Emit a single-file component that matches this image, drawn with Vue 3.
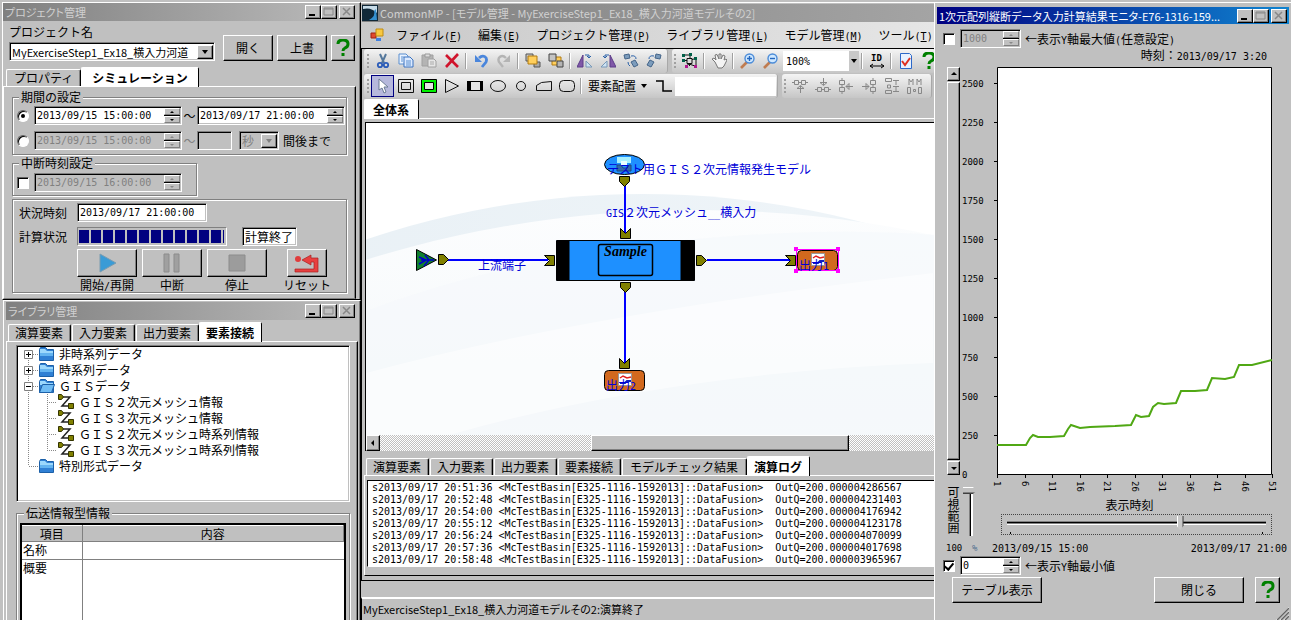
<script setup>
import { h, ref } from 'vue'

// Half-width runs use a 6px monospace face, full-width runs the 12px Japanese face.
const MixedText = (props) =>
  h('span', { class: 'mixed' }, props.text.split(/([\x20-\x7e]+)/).filter(Boolean).map((run) =>
    h('span', { class: /^[\x20-\x7e]/.test(run) ? 'half' : 'full' }, run)))
MixedText.props = ['text']

const startTime = ref('2013/09/15 15:00:00')
const endTime = ref('2013/09/17 21:00:00')
const offsetTime = ref('2013/09/15 15:00:00')
const breakTime = ref('2013/09/15 16:00:00')
const stateTime = ref('2013/09/17 21:00:00')
const period = ref('absolute')
const minOn = ref(true)
const shownTime = ref(109)
const range = ref(0)

const runButtons = [
  { id: 'start', label: '開始/再開', icon: '<path d="M4 1v18l16-9z" fill="#3a9bd6" stroke="#7a9cb0"/>' },
  { id: 'pause', label: '中断', icon: '<path d="M3 1h5v18H3zM13 1h5v18h-5z" fill="#a0a0a0" stroke="#8c8c8c"/>' },
  { id: 'stop', label: '停止', icon: '<path d="M3 2h16v16H3z" fill="#9c9c9c" stroke="#8c8c8c"/>' },
  { id: 'reset', label: 'リセット', icon: '<circle cx="2" cy="6" r="3" fill="#e03c3c"/><path d="M6 7l9-5v3h7v14H-1v-3h19V9h-3v3z" fill="#e84040" stroke="#a82020" stroke-width=".7"/>' },
]

const libTabs = ['演算要素', '入力要素', '出力要素', '要素接続']
const logTabs = ['演算要素', '入力要素', '出力要素', '要素接続', 'モデルチェック結果', '演算ログ']

const tree = [
  { text: '非時系列データ', kind: 'plus', first: true },
  { text: '時系列データ', kind: 'plus' },
  { text: 'ＧＩＳデータ', kind: 'minus' },
  { text: 'ＧＩＳ２次元メッシュ情報', kind: 'leaf' },
  { text: 'ＧＩＳ３次元メッシュ情報', kind: 'leaf' },
  { text: 'ＧＩＳ２次元メッシュ時系列情報', kind: 'leaf' },
  { text: 'ＧＩＳ３次元メッシュ時系列情報', kind: 'leaf', last: true },
  { text: '特別形式データ', kind: 'end' },
]

const menus = [
  ['ファイル', 'F'], ['編集', 'E'], ['プロジェクト管理', 'P'],
  ['ライブラリ管理', 'L'], ['モデル管理', 'M'], ['ツール', 'T'],
]

const g = (s, a = '') => `<g fill="none" stroke="#111" ${a}>${s}</g>`
const gray = (s) => `<g fill="none" stroke="#888">${s}</g>`
const editTools = [
  { n: '切り取り', d: '<path d="M5 1l4 9M11 1L7 10" stroke="#55789c" stroke-width="2" fill="none"/><circle cx="5" cy="12" r="2.2" fill="none" stroke="#2c5cb8" stroke-width="1.8"/><circle cx="11" cy="12" r="2.2" fill="none" stroke="#2c5cb8" stroke-width="1.8"/>' },
  { n: 'コピー', d: '<path d="M1 1h7l2 2v8H1z" fill="#eaf3ff" stroke="#5b8fd0"/><path d="M6 4h6l3 3v7H6z" fill="#dceaff" stroke="#3a72c0"/><path d="M8 8h5M8 10h5M8 12h5M3 4h3M3 6h2M3 8h2" stroke="#5b8fd0"/>' },
  { n: '貼り付け', d: '<path d="M1 2h11v11H1z" fill="#b4b4b4" stroke="#a0a0a0"/><path d="M4 1h5v3H4z" fill="#ddd" stroke="#999"/><path d="M7 6h6l2 2v6H7z" fill="#e6e6e6" stroke="#a0a0a0"/><path d="M9 9h4M9 11h4" stroke="#aaa"/>' },
  { n: '削除', d: '<path d="M2 2l12 12M14 1L2 14" stroke="#d0142c" stroke-width="2.6"/>' },
  null,
  { n: '元に戻す', d: '<path d="M6 5c4-4 9-1 7 4l-4 5" fill="none" stroke="#4a86dc" stroke-width="2.8"/><path d="M2 2v7h7z" fill="#4a86dc"/>' },
  { n: 'やり直し', d: '<path d="M10 5C6 1 1 4 3 9l4 5" fill="none" stroke="#b4b4b4" stroke-width="2.4"/><path d="M14 2v7H7z" fill="#b4b4b4"/>' },
  null,
  { n: '前面へ', d: '<path d="M1 1h7v7H1z" fill="#c8c8c8" stroke="#555"/><path d="M9 9h6v5H9z" fill="#a8a8a8" stroke="#555"/><path d="M3 3h9v8H3z" fill="#ffcf5c" stroke="#b07a10"/>' },
  { n: '背面へ', d: '<path d="M4 4h9v8H4z" fill="#ffcf5c" stroke="#b07a10"/><path d="M1 1h7v7H1z" fill="#c4c4c4" stroke="#444"/><path d="M9 8h6v6H9z" fill="#b4b4b4" stroke="#444"/>' },
  null,
  { n: '左右反転', d: '<path d="M6 2v12H0z" fill="#8058a8" stroke="#5c3c88"/><path d="M9 8v6h6z" fill="#cfe4f4" stroke="#7898b8"/><path d="M8 2h4v3m-2-2l2 2 2-2" fill="none" stroke="#2860a8"/>' },
  { n: '上下反転', d: '<path d="M10 2v12h6z" fill="#8058a8" stroke="#5c3c88"/><path d="M7 8v6H1z" fill="#cfe4f4" stroke="#7898b8"/><path d="M9 2H5v3M3 3l2 2 2-2" fill="none" stroke="#2860a8"/>' },
  { n: '右回転', d: '<path d="M1 2l5-1 1 4-5 1z" fill="#7c9cbc" stroke="#446488"/><path d="M8 9l4-2 3 5-4 2z" fill="#7c9cbc" stroke="#446488"/><path d="M8 3q5-1 5 3M5 9q0 3 2 4" fill="none" stroke="#2860a8"/>' },
  { n: '左回転', d: '<path d="M10 1l5 1-1 4-5-1z" fill="#7c9cbc" stroke="#446488"/><path d="M4 7l4 2-3 5-4-2z" fill="#7c9cbc" stroke="#446488"/><path d="M8 3Q3 2 3 6" fill="none" stroke="#2860a8"/>' },
]
const modelTools = [
  { n: 'モデル', d: g('<path d="M2 2h8M5 5.500h5v5H5zM2 7.500h3M10 6.500l4-1v8M7.500 10v3M4 13l3-2 6 2M8 2v3"/>') + '<path d="M0 1h3v3H0zM7 0h3v3H7zM12 4h3v3h-3zM0 6h3v3H0z" fill="#006048"/><path d="M3 12h3v3H3zM12 12h3v3h-3z" fill="#b01890"/>' },
  null,
  { n: '手のひら', d: '<path d="M4 9L1 6l2-1 2 2-1-5 2-.5L8 6V1h2v5l2-4 2 1-1 4 2-1 1 1-3 6-2 2H7z" fill="#f4f4f4" stroke="#777"/>' },
  null,
  { n: '拡大', d: '<path d="M7 9l-6 6" stroke="#c07c50" stroke-width="2.6"/><circle cx="9.500" cy="5.500" r="4.500" fill="#cfe8ff" stroke="#4c8cd8" stroke-width="1.400"/><path d="M7 5.500h5M9.500 3v5" stroke="#2468c0" stroke-width="1.400"/>' },
  { n: '縮小', d: '<path d="M7 9l-6 6" stroke="#c07c50" stroke-width="2.6"/><circle cx="9.500" cy="5.500" r="4.500" fill="#cfe8ff" stroke="#4c8cd8" stroke-width="1.400"/><path d="M7 5.500h5" stroke="#2468c0" stroke-width="1.400"/>' },
]
const shapeTools = [
  { n: '選択', on: true, d: '<path d="M4 1v11l3-2 2 5 2-1-2-5h4z" fill="#fff" stroke="#6a7a94"/>' },
  { n: '二重枠', d: g('<path d="M.5 1.500h15v13H.5zM3.500 4.500h9v7h-9z"/>') },
  { n: '緑枠', d: '<path d="M.5 1.500h15v13H.5z" fill="#00f000" stroke="#000"/><path d="M3.500 4.500h9v7h-9z" fill="#e4e4e4" stroke="#000"/>' },
  { n: '三角', d: g('<path d="M1.500 1.500v13l13-6.500z"/>') },
  { n: '帯', d: '<path d="M0 3h16v10H0z"/><path d="M4 4h9v8H4z" fill="#e4e4e4"/>' },
  { n: '楕円', d: g('<ellipse cx="8" cy="8" rx="7.500" ry="5.500"/>') },
  { n: '円', d: g('<circle cx="8" cy="8" r="4.500"/>') },
  { n: '台形', d: g('<path d="M.5 12.500v-5l5-3 10-1v9z"/>') },
  { n: '角丸', d: g('<rect x=".5" y="2.500" width="15" height="11" rx="4"/>') },
]
const alignTools = [
  { n: '上揃え', d: gray('<path d="M2.500 2.500h4v4h-4zM9.500 2.500h4v4h-4zM6 4.500h4M0 4.500h2M14 4.500h2M8.500 8v7M5 10.500h7l-3.500-3z"/>') },
  { n: '下揃え', d: gray('<path d="M2.500 9.500h4v4h-4zM9.500 9.500h4v4h-4zM6 11.500h4M0 11.500h2M14 11.500h2M8.500 0v7M5 4.500h7l-3.500 3z"/>') },
  { n: '左揃え', d: gray('<path d="M1.500 2.500h5v4h-5zM1.500 9.500h5v4h-5zM4 6.500v3M4 0v2M4 14v2M15 8.500H8M11 5.500v6l-3-3z"/>') },
  { n: '右揃え', d: gray('<path d="M9.500 2.500h5v4h-5zM9.500 9.500h5v4h-5zM12 6.500v3M12 0v2M12 14v2M1 8.500h7M5 5.500v6l3-3z"/>') },
  { n: '縦間隔', d: gray('<path d="M1.500.5h6v3h-6zM3.500 7h3v3h-3zM1.500 12.500h6v3h-6zM9 2.500h6M9 8.500h6M9 13.500h6M12 3v4M12 9v4"/>') },
  { n: '横間隔', d: gray('<path d="M.5 9.500h3v6h-3zM6.500 11.500h2v2h-2zM11.500 9.500h3v6h-3zM2 7V1l2 3 2-3v6M10 7V1l2 3 2-3v6"/>') },
]

const logs = [
  ['20:51:36', '4286567'], ['20:52:48', '4231403'], ['20:54:00', '4176942'], ['20:55:12', '4123178'],
  ['20:56:24', '4070099'], ['20:57:36', '4017698'], ['20:58:48', '3965967'],
].map(([t, v]) => `s2013/09/17 ${t} <McTestBasin[E325-1116-1592013]::DataFusion>  OutQ=200.00000${v}`)

const yTicks = Array.from({ length: 11 }, (_, i) => ({ v: i * 250, y: Math.round(412 - i * 39.15) }))
const xTicks = Array.from({ length: 11 }, (_, i) => ({ v: 1 + i * 5, x: Math.round(37 + i * 27.5) }))
const curve = '37,383 66,383 70,376 73,373 78,375 90,375 104,374 108,367 111,363 120,366 130,365 155,364 171,363 176,353 181,355 189,354 193,345 198,341 204,342 216,341 221,329 235,329 247,328 252,316 265,317 274,315 279,303 292,303 312,298'
</script>

<template>
  <div class="desktop">
    <aside class="left">
      <section class="window project">
        <header class="title">
          <h2>プロジェクト管理</h2>
          <span class="caps">
            <button aria-label="最小化"><svg width="14" height="12"><path d="M3 9h6" stroke="#000" stroke-width="2" /></svg></button>
            <button aria-label="最大化"><svg width="14" height="12"><path d="M2 2h9v7H2zM2 3h9" stroke="#888" fill="none" /></svg></button>
            <button class="x" aria-label="閉じる"><svg width="14" height="12"><path d="M3 2l7 7M10 2L3 9" stroke="#888" stroke-width="1.500" /></svg></button>
          </span>
        </header>
        <div class="head">
          <div class="name">
            <label for="project">プロジェクト名</label>
            <span class="combo sunken">
              <select id="project"><option>MyExerciseStep1_Ex18_横入力河道</option></select>
              <i class="drop raised"></i>
            </span>
          </div>
          <button class="btn raised">開く</button>
          <button class="btn raised">上書</button>
          <button class="btn help raised" aria-label="ヘルプ"><svg width="14" height="18"><path d="M2 5q0-4 5-4t5 4q0 3-3 4-2 1-2 3M7 14v3" fill="none" stroke="#008000" stroke-width="3" /></svg></button>
        </div>
        <div class="tabs">
          <button class="tab wide">プロパティ</button>
          <button class="tab on wide">シミュレーション</button>
        </div>
        <div class="page">
          <fieldset class="period">
            <legend>期間の設定</legend>
            <div class="line">
              <input v-model="period" type="radio" name="period" value="absolute" aria-label="終了時刻で指定">
              <span class="spin sunken long"><input v-model="startTime" aria-label="開始時刻"><i class="updown"><button aria-label="増"></button><button aria-label="減"></button></i></span>
              <span class="tilde">～</span>
              <span class="spin sunken long"><input v-model="endTime" aria-label="終了時刻"><i class="updown"><button aria-label="増"></button><button aria-label="減"></button></i></span>
            </div>
            <div class="line off">
              <input v-model="period" type="radio" name="period" value="relative" aria-label="期間で指定">
              <span class="spin sunken long"><input v-model="offsetTime" disabled aria-label="起点時刻"><i class="updown"><button aria-label="増"></button><button aria-label="減"></button></i></span>
              <span class="tilde">～</span>
              <span class="spin sunken amount"><input id="amount" disabled aria-label="期間"></span>
              <span class="combo sunken unit"><select disabled aria-label="単位"><option>秒</option></select><i class="drop raised"></i></span>
              <label class="after" for="amount">間後まで</label>
            </div>
          </fieldset>
          <fieldset class="break">
            <legend>中断時刻設定</legend>
            <div class="line off">
              <input type="checkbox" aria-label="中断時刻を使う">
              <span class="spin sunken long"><input v-model="breakTime" disabled aria-label="中断時刻"><i class="updown"><button aria-label="増"></button><button aria-label="減"></button></i></span>
            </div>
          </fieldset>
          <div class="status-box">
            <div class="line">
              <label class="cap" for="state">状況時刻</label>
              <span class="spin sunken state"><input id="state" v-model="stateTime" readonly></span>
            </div>
            <div class="line">
              <span class="cap">計算状況</span>
              <span class="progress sunken" role="progressbar" aria-valuenow="100"><i></i></span>
              <span class="done sunken">計算終了</span>
            </div>
            <div class="runs">
              <div v-for="b in runButtons" :key="b.id" :class="['run', b.id]">
                <button class="raised" :aria-labelledby="b.id"><svg width="22" height="20" v-html="b.icon"></svg></button>
                <span :id="b.id"><MixedText :text="b.label" /></span>
              </div>
            </div>
          </div>
        </div>
      </section>

      <section class="window library">
        <header class="title">
          <h2>ライブラリ管理</h2>
          <span class="caps">
            <button aria-label="最小化"><svg width="14" height="12"><path d="M3 9h6" stroke="#000" stroke-width="2" /></svg></button>
            <button aria-label="最大化"><svg width="14" height="12"><path d="M2 2h9v7H2zM2 3h9" stroke="#888" fill="none" /></svg></button>
            <button class="x" aria-label="閉じる"><svg width="14" height="12"><path d="M3 2l7 7M10 2L3 9" stroke="#888" stroke-width="1.500" /></svg></button>
          </span>
        </header>
        <div class="tabs">
          <button v-for="t in libTabs" :key="t" :class="['tab', { on: t === '要素接続' }]">{{ t }}</button>
        </div>
        <div class="page lib-page">
          <ul class="tree sunken">
            <li v-for="r in tree" :key="r.text">
              <svg v-if="r.kind === 'leaf'" width="62" height="16">
                <path :d="r.last ? 'M11.500 0v16M30.500 0v8M30 8.500h10' : 'M11.500 0v16M30.500 0v16M30 8.500h10'" stroke="#888" stroke-dasharray="1 1" />
                <path d="M44 3h9l-8 9h8" fill="none" stroke="#222" stroke-width="1.500" />
                <path d="M41.500.5h3l2 2.500-2 2.500h-3zM51.500 9.500h5v5h-5z" fill="#808000" stroke="#333300" />
              </svg>
              <svg v-else width="42" height="16">
                <path :d="r.first ? 'M11.500 8v8M12 8.500h10' : r.kind === 'end' ? 'M11.500 0v8M12 8.500h10' : 'M11.500 0v16M12 8.500h10'" stroke="#888" stroke-dasharray="1 1" />
                <path v-if="r.kind !== 'end'" d="M7.500 4.500h8v8h-8z" fill="#fff" stroke="#808080" />
                <path v-if="r.kind !== 'end'" :d="r.kind === 'plus' ? 'M9 8.500h5M11.500 6v5' : 'M9 8.500h5'" stroke="#000" />
                <path d="M22.500 3.500l1-2h5l2 2h6v11h-14z" fill="#3080d4" stroke="#1c60a8" />
                <path d="M23 3h5l2 2h6v2H23z" fill="#9cd8fc" />
                <path v-if="r.kind === 'minus'" d="M25.500 6.500h12l-3 8h-12z" fill="#70bcf4" stroke="#1c60a8" />
                <path v-else d="M23 7h13v3H23z" fill="#64b4f0" />
              </svg>
              <span>{{ r.text }}</span>
            </li>
          </ul>
          <fieldset class="info">
            <legend>伝送情報型情報</legend>
            <div class="grid-box">
              <table>
                <thead><tr><th scope="col">項目</th><th scope="col">内容</th></tr></thead>
                <tbody>
                  <tr><td>名称</td><td></td></tr>
                  <tr class="tall"><td>概要</td><td></td></tr>
                </tbody>
              </table>
            </div>
          </fieldset>
        </div>
      </section>
    </aside>

    <main class="center">
      <header class="title main-title">
        <svg width="16" height="16"><path d="M0 0h16v16H0z" fill="#102838" /><path d="M1 4Q9 2 15 8V1H1z" fill="#c8dce8" /><path d="M7 15q7-4 5-9l2-2 1 11z" fill="#3490d0" /></svg>
        <h1>CommonMP - [モデル管理 - MyExerciseStep1_Ex18_横入力河道モデルその2]</h1>
      </header>
      <nav class="menu">
        <svg width="14" height="14"><path d="M1 5h5v5H1z" fill="#e04830" stroke="#a02010" /><path d="M6 1h7v7H6z" fill="#f8c840" stroke="#c08c10" /><path d="M6 10h5v3H6z" fill="#4080e0" /></svg>
        <button v-for="m in menus" :key="m[0]">{{ m[0] }}<span class="mono">(<u>{{ m[1] }}</u>)</span></button>
      </nav>
      <div class="work">
        <div class="bar">
          <div class="strip edit">
            <template v-for="(t, i) in editTools" :key="i">
              <button v-if="t" :aria-label="t.n"><svg width="16" height="16" v-html="t.d"></svg></button>
              <i v-else class="sep"></i>
            </template>
          </div>
          <div class="strip rest">
            <template v-for="(t, i) in modelTools" :key="i">
              <button v-if="t" :aria-label="t.n"><svg width="16" height="16" v-html="t.d"></svg></button>
              <i v-else class="sep"></i>
            </template>
            <span class="zoom"><select aria-label="倍率"><option>100%</option></select><i class="drop"></i></span>
            <i class="sep"></i>
            <button aria-label="ID幅"><b class="id">ID</b><svg width="16" height="6"><path d="M1 3h14M4 1L1 3l3 2M12 1l3 2-3 2" fill="none" stroke="#000" /></svg></button>
            <i class="sep"></i>
            <button aria-label="チェック"><svg width="16" height="16"><path d="M2.500.5h9l2 2v13h-11z" fill="#e8f2ff" stroke="#2c68c8" /><path d="M4 8l3 4 5-7" fill="none" stroke="#e03020" stroke-width="2" /></svg></button>
            <button aria-label="ヘルプ"><svg width="14" height="18"><path d="M2 5q0-4 5-4t5 4q0 3-3 4-2 1-2 3M7 14v3" fill="none" stroke="#008000" stroke-width="3" /></svg></button>
          </div>
        </div>
        <div class="bar">
          <div class="strip shapes">
            <button v-for="t in shapeTools" :key="t.n" :class="{ sel: t.on }" :aria-label="t.n"><svg width="16" height="16" v-html="t.d"></svg></button>
            <i class="sep"></i>
            <button class="place">要素配置<i class="tri"></i></button>
            <button aria-label="折れ線"><svg width="16" height="16"><path d="M0 3h7v10h9" fill="none" stroke="#000" stroke-width="1.500" /></svg></button>
            <input class="search" aria-label="検索">
          </div>
          <div class="strip align">
            <button v-for="t in alignTools" :key="t.n" :aria-label="t.n"><svg width="16" height="16" v-html="t.d"></svg></button>
          </div>
        </div>
        <div class="tabs model-tabs"><button class="tab on">全体系</button></div>
        <div class="model-page">
          <svg class="canvas" height="312" width="100%" role="img" aria-label="モデル図">
            <defs>
              <linearGradient id="band" x1="0" x2="1"><stop offset="0" stop-color="#e4edf3" /><stop offset=".6" stop-color="#eef4f8" /><stop offset="1" stop-color="#e9f2f6" /></linearGradient>
              <linearGradient id="inner" x1="0" y1="0" x2="0" y2="1"><stop offset="0" stop-color="#fcfdfe" /><stop offset=".12" stop-color="#f4f8fa" /><stop offset=".3" stop-color="#fff" /></linearGradient>
            </defs>
            <circle cx="277" cy="939" r="868" fill="url(#band)" />
            <ellipse cx="330" cy="939" rx="980" ry="852" fill="url(#inner)" />
            <path d="M0 188Q180 120 420 110T840 170V313H0z" fill="#f5f9fb" opacity=".6" />
            <path d="M0 313V250Q220 190 567 150V240Q300 250 80 313z" fill="#fff" opacity=".5" />

            <g stroke="#00f" stroke-width="2">
              <path d="M259 62v48M259 169v72M82 137h100M341 137h83" />
            </g>
            <ellipse cx="258.500" cy="41.500" rx="20" ry="10" fill="#1e90ff" stroke="#000" />
            <path d="M251 34h14v6h-14z" fill="#a8f0ff" /><path d="M255 38h6v5h-6z" fill="#e8ffff" /><path d="M251 42h4l2 3h4l2-3h2v6h-14z" fill="#3468a8" stroke="#1c4880" />
            <g fill="#1e90ff" stroke="#000">
              <path d="M190.500 117.500h138v40h-138z" />
              <rect x="232.500" y="121.500" width="54" height="31" rx="2" stroke-width="1.500" />
              <path d="M191 118h12v39h-12zM315 118h13v39h-13z" fill="#000" />
            </g>
            <text class="script" x="259.500" y="133" text-anchor="middle">Sample</text>
            <path d="M50.500 126.500v21l20-10.500z" fill="#108030" stroke="#000" />
            <path d="M53 134l7 3-7 4M55 137h13M59 132l4 5-5 6" fill="none" stroke="#0000c8" stroke-width="1.500" />
            <g fill="#808000" stroke="#000">
              <path d="M253.500 53.500h10v5l-5 5-5-5zM254.500 159.500h10v5l-5 5-5-5z" />
              <path d="M254.500 105.500l5 5 5-5v10h-10zM253.500 235.500l5 5 5-5v10h-10z" />
              <path d="M72.500 131.500h5l5 5-5 5h-5zM330.500 132.500h5l5 5-5 5h-5z" />
              <path d="M178.500 132.500h10v10h-10l5-5zM419.500 132.500h10v10h-10l5-5z" />
            </g>
            <g fill="#d2691e" stroke="#000">
              <rect x="238.500" y="247.500" width="40" height="20" rx="4" />
              <rect x="431.500" y="127.500" width="40" height="20" rx="4" />
            </g>
            <path d="M252.500 250.500h13v12h-13zM445.500 130.500h13v12h-13z" fill="#fff" stroke="#999" />
            <path d="M254 255l3-2 4 2 4-1M447 135l3-2 4 2 4-1" fill="none" stroke="#e02020" stroke-width="1.500" />
            <path d="M254 260h5l2-2h4M447 140h5l2-2h4" fill="none" stroke="#1020c0" stroke-width="2" />
            <path d="M430.500 126.500h42v21h-42z" fill="none" stroke="#f0f" />
            <path d="M428 124h4v4h-4zM470 124h4v4h-4zM428 146h4v4h-4zM470 146h4v4h-4z" fill="#f0f" />
            <g class="names">
              <text x="241" y="51">テスト用ＧＩＳ２次元情報発生モデル</text>
              <text x="240" y="94"><tspan class="half">GIS</tspan>２次元メッシュ<tspan class="half">__</tspan>横入力</text>
              <text x="112" y="147">上流端子</text>
              <text x="433" y="147">出力<tspan class="half">1</tspan></text>
              <text x="240" y="267">出力<tspan class="half">2</tspan></text>
            </g>
          </svg>
          <div class="hscroll"><button class="raised" aria-label="左へ"><svg width="12" height="12"><path d="M7 3v6L4 6z" /></svg></button><i class="thumb raised"></i></div>
        </div>
        <div class="tabs log-tabs">
          <button v-for="t in logTabs" :key="t" :class="['tab', { on: t === '演算ログ', extra: t.length > 6 }]">{{ t }}</button>
        </div>
        <div class="log-page">
          <ul class="log"><li v-for="l in logs" :key="l">{{ l }}</li></ul>
        </div>
      </div>
      <footer class="status">MyExerciseStep1_Ex18_横入力河道モデルその2:演算終了</footer>
    </main>

    <section class="monitor">
      <header class="title active">
        <h2>1次元配列縦断データ入力計算結果モニタ-E76-1316-159...</h2>
        <span class="caps">
          <button aria-label="最小化"><svg width="14" height="12"><path d="M3 9h6" stroke="#000" stroke-width="2" /></svg></button>
          <button aria-label="最大化"><svg width="14" height="12"><path d="M2 2h9v7H2zM2 3h9" stroke="#888" fill="none" /></svg></button>
          <button class="x" aria-label="閉じる"><svg width="14" height="12"><path d="M3 2l7 7M10 2L3 9" stroke="#888" stroke-width="1.500" /></svg></button>
        </span>
      </header>
      <div class="line limit off">
        <input type="checkbox" aria-label="最大値を指定">
        <span class="spin sunken short"><input id="ymax" value="1000" disabled><i class="updown"><button aria-label="増"></button><button aria-label="減"></button></i></span>
        <label for="ymax"><MixedText text="←表示Y軸最大値(任意設定)" /></label>
      </div>
      <p class="now"><MixedText text="時刻：2013/09/17 3:20" /></p>
      <div class="chart">
        <div class="vscroll">
          <button class="raised" aria-label="上へ"><svg width="11" height="12"><path d="M3 7h6L6 4z" /></svg></button>
          <i class="thumb raised"></i>
          <button class="raised" aria-label="下へ"><svg width="11" height="12"><path d="M3 5h6L6 8z" /></svg></button>
        </div>
        <svg width="330" height="424" class="plot" role="img" aria-label="縦断グラフ">
          <path d="M37.500 5.500h274v407h-274z" fill="#fff" stroke="#000" />
          <g v-for="t in yTicks" :key="t.v">
            <path v-if="t.v" :d="`M34 ${t.y + .5}h4`" stroke="#000" />
            <text x="2" :y="t.y + 4">{{ t.v }}</text>
          </g>
          <g v-for="t in xTicks" :key="t.v">
            <path :d="`M${t.x + .5} 412v4`" stroke="#000" />
            <text :transform="`translate(${t.x - 3} 419) rotate(90)`">{{ t.v }}</text>
          </g>
          <polyline :points="curve" fill="none" stroke="#50a814" stroke-width="2" />
        </svg>
      </div>
      <div class="controls">
        <label class="vlabel" for="range">可視範囲</label>
        <input id="range" v-model="range" class="vrange" type="range" min="0" max="100">
        <div class="timer">
          <label for="time">表示時刻</label>
          <div class="focus"><input id="time" v-model="shownTime" type="range" min="0" max="162"><span class="marks"></span></div>
        </div>
      </div>
      <div class="dates"><span class="pct">100</span><span class="unit-pct">%</span><span class="from">2013/09/15 15:00</span><span class="to">2013/09/17 21:00</span></div>
      <div class="line limit">
        <input v-model="minOn" type="checkbox" aria-label="最小値を指定">
        <span class="spin sunken short"><input id="ymin" value="0"><i class="updown"><button aria-label="増"></button><button aria-label="減"></button></i></span>
        <label for="ymin"><MixedText text="←表示Y軸最小値" /></label>
      </div>
      <div class="foot">
        <button class="btn raised">テーブル表示</button>
        <button class="btn raised push">閉じる</button>
        <button class="btn help raised" aria-label="ヘルプ"><svg width="14" height="18"><path d="M2 5q0-4 5-4t5 4q0 3-3 4-2 1-2 3M7 14v3" fill="none" stroke="#008000" stroke-width="3" /></svg></button>
      </div>
      <svg class="grip" width="14" height="14"><path d="M1 14L14 1M5 14l9-9M9 14l5-5" stroke="#fff" /><path d="M2 14L14 2M6 14l8-8M10 14l4-4" stroke="#666" stroke-width="1.500" /></svg>
    </section>
  </div>
</template>

<style>
body { background: #fff; }
.mixed .half, .names .half, .mono { font-family: "DejaVu Sans Mono", monospace; font-size: 10px; line-height: 1; white-space: pre; }
</style>

<style scoped>
* { box-sizing: border-box; margin: 0; padding: 0; }
.desktop {
  display: grid; grid-template-columns: 361px minmax(0, 1fr) 357px;
  height: 100vh; border: solid #fff; border-width: 0 3px 2px 0; overflow: hidden;
  background: #c0c0c0; color: #000;
  font: 12px/14px "Noto Sans CJK JP", sans-serif; white-space: nowrap;
}
button, input, select { font: inherit; color: inherit; border-radius: 0; outline: 0; }
button { background: #c0c0c0; border: 0; white-space: nowrap; }
ul { list-style: none; }
svg { display: block; flex: none; }
.raised { border: 1px solid; border-color: #fff #000 #000 #fff; box-shadow: inset -1px -1px #808080; background: #c0c0c0; }
.sunken { border: 1px solid; border-color: #808080 #fff #fff #808080; box-shadow: inset 1px 1px #000, inset -1px -1px #c0c0c0; background: #fff; }

.left { display: flex; flex-direction: column; min-height: 0; background: #c0c0c0; }
.window { border: 1px solid; border-color: #fff #000 #000 #fff; box-shadow: inset -1px 0 #808080; }
.project { margin: 2px 0 0 2px; }
.title { display: flex; align-items: center; height: 18px; padding: 0 2px; background: linear-gradient(90deg, #808080, #bcbcbc); color: #d0d0d0; }
.title h1, .title h2 { flex: 1; min-width: 0; overflow: hidden; font-size: 11px; font-weight: 400; line-height: 18px; font-feature-settings: "palt"; }
.project .title, .library .title { margin-right: 3px; }
.caps { display: flex; }
.caps button { display: grid; place-items: center; width: 16px; height: 14px; border: 1px solid; border-color: #fff #000 #000 #fff; box-shadow: inset -1px -1px #808080; }
.caps .x { margin-left: 2px; }

.head { display: flex; align-items: flex-end; gap: 4px; padding: 3px 0 2px 6px; }
.name { width: 206px; margin-right: 4px; display: flex; flex-direction: column; gap: 2px; }
.name label { line-height: 16px; }
.combo { display: flex; height: 19px; padding: 2px 1px 1px 2px; }
.combo select { flex: 1; min-width: 0; appearance: none; border: 0; background: none; line-height: 14px; }
#project { font-size: 11px; }
.drop { width: 16px; display: grid; place-items: center; flex: none; }
.drop::after, .tri { content: ""; border: solid transparent; border-width: 4px 3px 0; border-top-color: #000; }
.btn { height: 26px; width: 50px; display: grid; place-items: center; }
.help { width: 24px; }

.tabs { display: flex; align-items: flex-end; height: 19px; margin-top: 4px; padding-left: 3px; }
.tab { height: 17px; padding: 0 7px 0 6px; border: 1px solid; border-color: #fff #000 transparent #fff; border-bottom: 0; border-radius: 2px 2px 0 0; margin-right: 1px; line-height: 14px; box-shadow: inset -1px 0 #808080; }
.tab.on { height: 20px; margin-bottom: -1px; background: #fff; font-weight: 700; z-index: 1; box-shadow: none; margin-left: -1px; }
.wide { padding: 0 7px; }
.on.wide { padding: 0 10px; }
.page { border: 1px solid; border-color: #fff #000 #808080 #fff; box-shadow: inset -1px 0 #808080; margin-right: 4px; padding: 3px 8px 5px; }

fieldset { min-width: 0; border: 1px solid #808080; box-shadow: 1px 1px #fff, inset 1px 1px #fff; }
legend { margin-left: 4px; padding: 0 2px; background: #c0c0c0; line-height: 14px; }
.line { display: flex; align-items: center; height: 19px; }
.period { padding: 2px 0 4px 4px; display: flex; flex-direction: column; gap: 6px; }
.period legend, .break legend { margin-left: 2px; }
.break { width: 185px; margin-top: 1px; padding: 3px 0 3px 4px; }
.line input[type="radio"], .line input[type="checkbox"] { appearance: none; width: 12px; height: 12px; margin-right: 5px; background: #fff; border: 1px solid; border-color: #606060 #fff #fff #606060; box-shadow: inset 1px 1px #000; display: grid; place-items: center; flex: none; }
.line input[type="radio"] { border-radius: 50%; }
.line input[type="radio"]:checked::after { content: ""; width: 4px; height: 4px; border-radius: 50%; background: #000; }
.line input[type="checkbox"]:checked::after { content: ""; width: 4px; height: 7px; border: solid #000; border-width: 0 2px 2px 0; transform: rotate(40deg); }
.spin { display: flex; height: 19px; padding: 1px; font: 10px/15px "DejaVu Sans Mono", monospace; }
.spin input { flex: 1; min-width: 0; border: 0; background: none; padding-left: 1px; }
.long { width: 148px; }
.off .sunken { background: #c0c0c0; color: #808080; }
.off .sunken input, .off select { color: #808080; opacity: 1; }
.updown { width: 16px; display: grid; gap: 1px; background: #000; }
.updown button { display: grid; place-items: center; border: 1px solid; border-color: #fff #808080 #808080 #fff; }
.updown button::after { content: ""; border: solid transparent; border-width: 0 2px 2px; border-bottom-color: #000; }
.updown button + button::after { border-width: 2px 2px 0; border-top-color: #000; }
.off .updown button::after { border-bottom-color: #888; border-top-color: #888; }
.tilde { width: 15px; text-align: center; display: flex; justify-content: center; }
.off .tilde { color: #808080; }
.amount { width: 35px; }
.unit { width: 40px; margin: 0 4px 0 7px; }
.off .drop::after { border-top-color: #808080; }

.status-box { margin-top: 3px; border: 1px solid #808080; box-shadow: 1px 1px #fff, inset 1px 1px #fff; padding: 3px 0 0 6px; }
.status-box .line + .line { margin-top: 5px; }
.cap { width: 58px; }
.state { width: 130px; }
.progress { width: 150px; height: 19px; padding: 2px 2px 2px 1px; background: #c0c0c0; box-shadow: none; margin-right: 15px; }
.progress i { display: block; height: 100%; background: repeating-linear-gradient(90deg, #000080 0 10px, #c0c0c0 10px 12px); }
.done { width: 55px; height: 19px; padding: 1px 2px; line-height: 15px; }
.runs { display: flex; gap: 5px; padding: 3px 0 0 58px; }
.run { width: 60px; display: flex; flex-direction: column; align-items: center; gap: 1px; line-height: 13px; }
.run button { width: 100%; height: 28px; display: grid; place-items: center; }
.reset { width: 40px; margin-left: 15px; }
.run svg { overflow: visible; }

.library { flex: 1; min-height: 0; margin-left: 3px; padding: 1px 0 0 2px; border-bottom: 0; display: flex; flex-direction: column; }
.library .tabs { margin-top: 2px; flex: none; padding-left: 2px; }
.library .title { flex: none; }
.lib-page { flex: 1; min-height: 0; display: flex; flex-direction: column; padding: 3px 7px 0 9px; margin-right: 2px; border-bottom: 0; }
.tree { height: 157px; flex: none; }
.tree li { display: flex; align-items: center; height: 16px; }
.info { flex: 1; min-height: 0; margin-top: 4px; padding: 3px 3px 0; border-bottom: 0; display: flex; flex-direction: column; }
.grid-box { flex: 1; border: 2px solid; border-color: #000 #000 #808080; border-bottom: 0; background: #fff; display: flex; }
table { width: 100%; height: 100%; min-height: 94px; border-collapse: collapse; }
th { height: 16px; font-weight: 400; line-height: 14px; background: #c0c0c0; border: 1px solid #808080; border-top-color: #fff; }
th:first-child, td:first-child { width: 60px; border-left: 0; }
td { height: 18px; line-height: 15px; padding-left: 1px; vertical-align: top; border: 1px solid #808080; border-right: 0; }
.tall td { height: auto; border-bottom: 0; }

.center { min-width: 0; display: flex; flex-direction: column; border-top: 1px solid #fff; margin-top: 2px; overflow: hidden; }
.main-title { height: 18px; margin: 1px 0 0 1px; padding: 0 1px 0 0; gap: 2px; background: linear-gradient(90deg, #808080, #a4a4a4); flex: none; }
.menu { height: 26px; display: flex; align-items: center; gap: 16px; padding-left: 9px; background: linear-gradient(90deg, #c8c8c8, #e6e6e6); flex: none; }
.menu svg { margin-right: -4px; }
.menu button { background: none; display: flex; align-items: baseline; flex: none; }
.work { flex: 1; border: 1px solid #000; border-width: 1px 0 1px 1px; min-height: 0; display: flex; flex-direction: column; padding-left: 2px; }
.bar { display: flex; height: 25px; gap: 4px; flex: none; }
.strip { display: flex; align-items: center; height: 24px; border-radius: 3px; padding-left: 7px; background: linear-gradient(#f4f4f4, #c6c6c6); border-right: 1px solid #a8a8a8; flex: none; }
.strip::before { content: ""; align-self: center; width: 0; height: 14px; margin: 0 2px 0 -4px; border-left: 2px dotted #a0a0a0; }
.strip button { width: 23px; height: 22px; display: flex; flex-direction: column; align-items: center; justify-content: center; background: none; flex: none; }
.sep { width: 2px; height: 16px; margin: 0 2px; border-left: 1px solid #a0a0a0; border-right: 1px solid #fff; flex: none; }
.edit { width: 304px; }
.rest { width: 264px; padding-left: 4px; }
.rest::before { margin-left: -2px; }
.id { font: 700 9px/9px "DejaVu Sans Mono", monospace; }
.zoom { display: flex; width: 76px; height: 20px; margin-left: 1px; background: #fff; flex: none; }
.zoom select { flex: 1; min-width: 0; appearance: none; border: 0; background: none; padding-left: 3px; font: 10px "DejaVu Sans Mono", monospace; }
.zoom .drop { width: 10px; background: #c8c8c8; }
.shapes { width: 414px; }
.strip .sel { background: #b6b8dc; border: 1px solid #000080; }
.strip .place { width: auto; flex-direction: row; gap: 5px; padding: 0 5px 0 4px; }
.search { width: 101px; height: 19px; border: 0; }
.align { width: 150px; padding-left: 5px; }
.align::before { margin-left: -3px; }
.model-tabs { margin-top: 1px; padding-left: 1px; border-bottom: 1px solid #fff; flex: none; height: 19px; }
.model-tabs .tab { padding: 0 9px 0 8px; }
.model-page { margin: 3px 0 0 1px; border-left: 1px solid #000; border-top: 1px solid #000; flex: none; }
.canvas { background: #fff; }
.names { fill: #0000d8; font-size: 12px; }
.script { font: italic 700 14px "Liberation Serif", serif; }
.hscroll { display: flex; height: 16px; background: repeating-conic-gradient(#fff 0 25%, #c0c0c0 0 50%) 0 0 / 2px 2px; }
.hscroll button { width: 14px; display: grid; place-items: center; }
.hscroll .thumb { width: 258px; margin-left: 211px; }
.log-tabs { flex: none; margin-top: 5px; padding-left: 2px; }
.log-tabs .extra { padding: 0 8px 0 7px; }
.log-page { border-top: 1px solid #fff; border-left: 1px solid #fff; padding: 4px 0 8px 2px; border-bottom: 1px solid #000; flex: none; margin-bottom: 4px; }
.log { height: 87px; background: #fff; border: 1px solid; border-color: #000 #fff #fff #000; border-right: 0; padding: 1px 0 0 4px; font: 10px/12px "DejaVu Sans Mono", monospace; }
.log li { white-space: pre; }
.status { flex: none; height: 23px; margin-top: 16px; border-top: 2px solid #fff; border-left: 1px solid #000; font-size: 11px; line-height: 20px; padding-left: 1px; font-feature-settings: "palt"; }

.monitor { min-width: 0; margin-top: 2px; border-left: 1px solid #fff; border-top: 1px solid #fff; padding: 4px 2px 0; display: flex; flex-direction: column; background: #c0c0c0; }
.active { height: 17px; color: #fff; background: linear-gradient(90deg, #000080, #1084d0); }
.limit { flex: none; padding-left: 6px; }
.active + .limit { margin-top: 5px; }
.short { width: 61px; margin-right: 4px; }
.now { align-self: flex-end; margin-right: 22px; height: 14px; }
.chart { display: flex; }
.vscroll { width: 15px; height: 408px; margin: 5px 0 0 10px; display: flex; flex-direction: column; gap: 1px; }
.vscroll button { width: 13px; height: 14px; display: grid; place-items: center; }
.vscroll .thumb { flex: 1; width: 13px; }
.plot { overflow: visible; font: 9px "DejaVu Sans Mono", monospace; }
.controls { display: flex; padding-left: 9px; height: 54px; }
.vlabel { writing-mode: vertical-rl; line-height: 14px; }
input[type="range"] { appearance: none; background: none; }
.vrange { writing-mode: vertical-lr; width: 16px; height: 49px; margin: 1px 0 0 3px; }
.vrange::-webkit-slider-runnable-track { background: linear-gradient(90deg, #808080 1px, #000 1px 2px, #fff 2px) 6px 0 / 4px 100% no-repeat; height: 100%; width: 100%; }
.vrange::-webkit-slider-thumb { appearance: none; width: 14px; height: 7px; background: linear-gradient(#fff 1px, #c0c0c0 1px 5px, #404040 6px); clip-path: polygon(0 0, 70% 0, 100% 50%, 70% 100%, 0 100%); }
.timer { flex: 1; padding: 12px 17px 0 22px; }
.timer label { display: block; text-align: center; margin-right: 14px; height: 16px; }
.focus { border: 1px dotted #444; height: 21px; padding: 1px 5px 0; }
.focus input { display: block; width: 100%; height: 14px; }
.focus input::-webkit-slider-runnable-track { height: 14px; background: linear-gradient(#808080 1px, #000 1px 2px, #fff 3px) 0 5px / 100% 4px no-repeat; }
.focus input::-webkit-slider-thumb { appearance: none; width: 7px; height: 14px; background: linear-gradient(90deg, #fff 1px, #c8c8c8 1px 5px, #404040 6px); clip-path: polygon(0 0, 100% 0, 100% 70%, 50% 100%, 0 70%); }
.marks { display: block; height: 2px; margin: 2px 3px 0; border: 1px solid #000; border-width: 0 1px; }
.dates { display: flex; align-items: center; height: 16px; padding: 0 2px 0 9px; font: 10px "DejaVu Sans Mono", monospace; }
.pct { font-size: 9px; width: 26px; }
.unit-pct { font-size: 9px; color: #507090; width: 20px; }
.to { margin-left: auto; }
.foot { display: flex; padding: 2px 9px 0 15px; gap: 11px; }
.foot .btn { width: 90px; flex: none; }
.foot .push { margin-left: auto; }
.foot .help { width: 25px; }
.grip { align-self: flex-end; margin-top: auto; }
</style>
